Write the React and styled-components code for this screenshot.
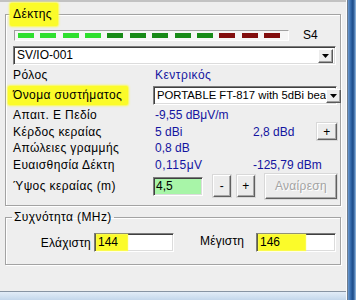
import React from "react";
import styled, { createGlobalStyle } from "styled-components";

const Global = createGlobalStyle`
  html, body { margin: 0; padding: 0; background: #eeeeee; }
  body {
    font-family: "Liberation Sans", Arial, sans-serif;
    font-size: 12px;
    color: #000;
  }
  * { box-sizing: border-box; }
`;

const Window = styled.div`
  width: 356px;
  height: 300px;
  display: grid;
  grid-template-columns: 1fr 10px;
  grid-template-rows: 1fr 9px;
  overflow: hidden;
`;

const Client = styled.div`
  background: #eeeeee;
  border-top: 2px solid #c2c2c2;
  padding: 1px 0 0 5px;
  display: flex;
  flex-direction: column;
  gap: 4px;
`;

const RightFrame = styled.div`
  grid-column: 2;
  grid-row: 1 / span 2;
  background: linear-gradient(
    90deg,
    #fafcff 0,
    #fafcff 1px,
    #6f7c8c 1px,
    #6f7c8c 2px,
    #6c9ad0 2px,
    #2e64a6 5px,
    #1c4a86 7px,
    #5f8fc4 9px,
    #a9c6e4 10px
  );
`;

const BottomFrame = styled.div`
  grid-column: 1;
  grid-row: 2;
  background: linear-gradient(180deg, #8894a3 0, #8894a3 1px, #e2ecf7 1px, #c4d7eb 100%);
`;

const Group = styled.fieldset`
  margin: 0;
  padding: 0;
  width: 336px;
  min-width: 0;
  border: 1px solid #a3a3a3;
  box-shadow: inset 1px 1px 0 #ffffff, 1px 1px 0 #ffffff;
`;

const Legend = styled.legend`
  margin-left: ${(p) => (p.$mark ? "4px" : "6px")};
  padding: ${(p) => (p.$mark ? "0 6px 0 3px" : "0 2px")};
  height: ${(p) => (p.$mark ? "23px" : "14px")};
  line-height: ${(p) => (p.$mark ? "23px" : "14px")};
  letter-spacing: 0.4px;
  background: ${(p) => (p.$mark ? "#fbfb2a" : "transparent")};
  box-shadow: ${(p) => (p.$mark ? "0 0 2px 1px #fbfb4a" : "none")};
  border-radius: 2px;
`;

const ReceiverBody = styled.div`
  padding: 4px 3px 6px 7px;
`;

const MeterRow = styled.div`
  display: flex;
  align-items: center;
  height: 11px;
`;

const Meter = styled.div`
  margin-left: 1px;
  width: 275px;
  height: 11px;
  border: 1px solid;
  border-color: #a0a0a0 #ffffff #ffffff #a0a0a0;
  background: #f6f6f6;
  display: flex;
  align-items: center;
  padding-left: 3px;
  gap: 6.36px;
`;

const Dash = styled.span`
  width: 16px;
  height: 5px;
  background: ${(p) => p.$color};
`;

const MeterLabel = styled.span`
  margin-left: 14px;
  line-height: 11px;
`;

const Combo = styled.div`
  margin-top: ${(p) => p.$top || 0}px;
  height: 19px;
  width: ${(p) => (p.$width ? `${p.$width}px` : "auto")};
  background: #ffffff;
  border: 1px solid;
  border-color: #7c7c7c #ffffff #ffffff #7c7c7c;
  box-shadow: inset 1px 1px 0 #404040, inset -1px -1px 0 #dcdcdc;
  display: flex;
  align-items: center;
  padding: 0 2px 0 3px;
  grid-column: ${(p) => p.$span || "auto"};
`;

const ComboText = styled.span`
  flex: 1;
  white-space: nowrap;
  line-height: 15px;
  font-size: ${(p) => (p.$small ? "11.3px" : "12px")};
`;

const DropButton = styled.span`
  width: 15px;
  height: 14px;
  flex: none;
  background: #ececec;
  border: 1px solid;
  border-color: #ffffff #5a5a5a #5a5a5a #ffffff;
  box-shadow: inset -1px -1px 0 #a0a0a0;
  display: flex;
  align-items: center;
  justify-content: center;
`;

const InfoGrid = styled.div`
  display: grid;
  grid-template-columns: 140px 98px 66px 20px;
  grid-template-rows: 20px 21px 17px 17px 16px 17px 26px;
  align-items: center;
`;

const Label = styled.span`
  white-space: nowrap;
  letter-spacing: 0.4px;
`;

const Marked = styled.span`
  display: inline-block;
  margin-left: -5px;
  padding: 0 6px 0 5px;
  height: 19px;
  line-height: 19px;
  background: #fbfb2a;
  box-shadow: 0 0 2px 1px #fbfb4a;
  border-radius: 2px;
`;

const Value = styled.span`
  grid-column: ${(p) => p.$span || "auto"};
  color: #1414a0;
  padding-left: 2px;
  white-space: nowrap;
  letter-spacing: ${(p) => (p.$wide ? "0.5px" : "0")};
`;

const Controls = styled.div`
  grid-column: 2 / -1;
  display: flex;
  align-items: center;
`;

const Field = styled.div`
  width: ${(p) => p.$width}px;
  height: 19px;
  background: ${(p) => p.$bg || "#ffffff"};
  border: 1px solid;
  border-color: #7c7c7c #ffffff #ffffff #7c7c7c;
  box-shadow: inset 1px 1px 0 #404040, inset -1px -1px 0 #dcdcdc;
  display: flex;
  align-items: center;
  padding-left: 2px;
  line-height: 15px;
`;

const Mark = styled.span`
  display: inline-block;
  width: ${(p) => p.$width}px;
  height: 15px;
  padding-left: 1px;
  background: #fbfb2a;
  box-shadow: 0 0 1px 1px #fbfb4a;
`;

const Button = styled.button`
  margin-left: ${(p) => p.$gap || 0}px;
  width: ${(p) => p.$width}px;
  height: ${(p) => p.$height}px;
  padding: 0;
  font: inherit;
  letter-spacing: 0.3px;
  color: ${(p) => (p.disabled ? "#a3a3a3" : "#000")};
  text-shadow: ${(p) => (p.disabled ? "1px 1px 0 #ffffff" : "none")};
  background: #ececec;
  border: 1px solid;
  border-color: #ffffff #606060 #606060 #ffffff;
  box-shadow: inset -1px -1px 0 #a8a8a8, 0 0 0 1px #d8d8d8;
  display: flex;
  align-items: center;
  justify-content: center;
`;

const FreqBody = styled.div`
  display: grid;
  grid-template-columns: 85px 80px 1fr 80px;
  column-gap: 3px;
  align-items: center;
  padding: 9px 4px 12px 0;
`;

const FreqLabel = styled.span`
  text-align: ${(p) => (p.$right ? "right" : "left")};
  padding-left: ${(p) => p.$indent || 0}px;
  margin-top: ${(p) => p.$lift || 0}px;
  letter-spacing: 0.2px;
`;

const Arrow = () => (
  <svg width="7" height="4" viewBox="0 0 7 4">
    <path d="M0 0 H7 L3.5 4 Z" fill="#000" />
  </svg>
);

const dashes = [
  ...Array(4).fill("#2edf2e"),
  ...Array(5).fill("#178a17"),
  ...Array(3).fill("#820e0e"),
];

export default function App() {
  return (
    <>
      <Global />
      <Window>
        <Client>
          <Group>
            <Legend $mark>Δέκτης</Legend>
            <ReceiverBody>
              <MeterRow>
                <Meter>
                  {dashes.map((c, i) => (
                    <Dash key={i} $color={c} />
                  ))}
                </Meter>
                <MeterLabel>S4</MeterLabel>
              </MeterRow>
              <Combo $top={5} $width={323}>
                <ComboText>SV/IO-001</ComboText>
                <DropButton>
                  <Arrow />
                </DropButton>
              </Combo>
              <InfoGrid>
                <Label>Ρόλος</Label>
                <Value $span="2 / -1" $wide>Κεντρικός</Value>

                <Label>
                  <Marked>Όνομα συστήματος</Marked>
                </Label>
                <Combo $span="2 / -1">
                  <ComboText $small>PORTABLE FT-817 with 5dBi bea</ComboText>
                  <DropButton>
                    <Arrow />
                  </DropButton>
                </Combo>

                <Label>Απαιτ. Ε Πεδίο</Label>
                <Value $span="2 / -1">-9,55 dBμV/m</Value>

                <Label>Κέρδος κεραίας</Label>
                <Value>5 dBi</Value>
                <Value>2,8 dBd</Value>
                <Button $width={20} $height={17}>+</Button>

                <Label>Απώλειες γραμμής</Label>
                <Value $span="2 / -1">0,8 dB</Value>

                <Label>Ευαισθησία Δέκτη</Label>
                <Value $wide>0,115μV</Value>
                <Value $span="3 / -1">-125,79 dBm</Value>

                <Label>Ύψος κεραίας (m)</Label>
                <Controls>
                  <Field $width={50} $bg="#a8f5a8">4,5</Field>
                  <Button $gap={10} $width={18} $height={22}>-</Button>
                  <Button $gap={6} $width={18} $height={22}>+</Button>
                  <Button $gap={10} $width={72} $height={25} disabled>
                    Αναίρεση
                  </Button>
                </Controls>
              </InfoGrid>
            </ReceiverBody>
          </Group>
          <Group>
            <Legend>Συχνότητα (MHz)</Legend>
            <FreqBody>
              <FreqLabel $right>Ελάχιστη</FreqLabel>
              <Field $width={80}>
                <Mark $width={30}>144</Mark>
              </Field>
              <FreqLabel $indent={23} $lift={-3}>Μέγιστη</FreqLabel>
              <Field $width={80}>
                <Mark $width={46}>146</Mark>
              </Field>
            </FreqBody>
          </Group>
        </Client>
        <RightFrame />
        <BottomFrame />
      </Window>
    </>
  );
}
